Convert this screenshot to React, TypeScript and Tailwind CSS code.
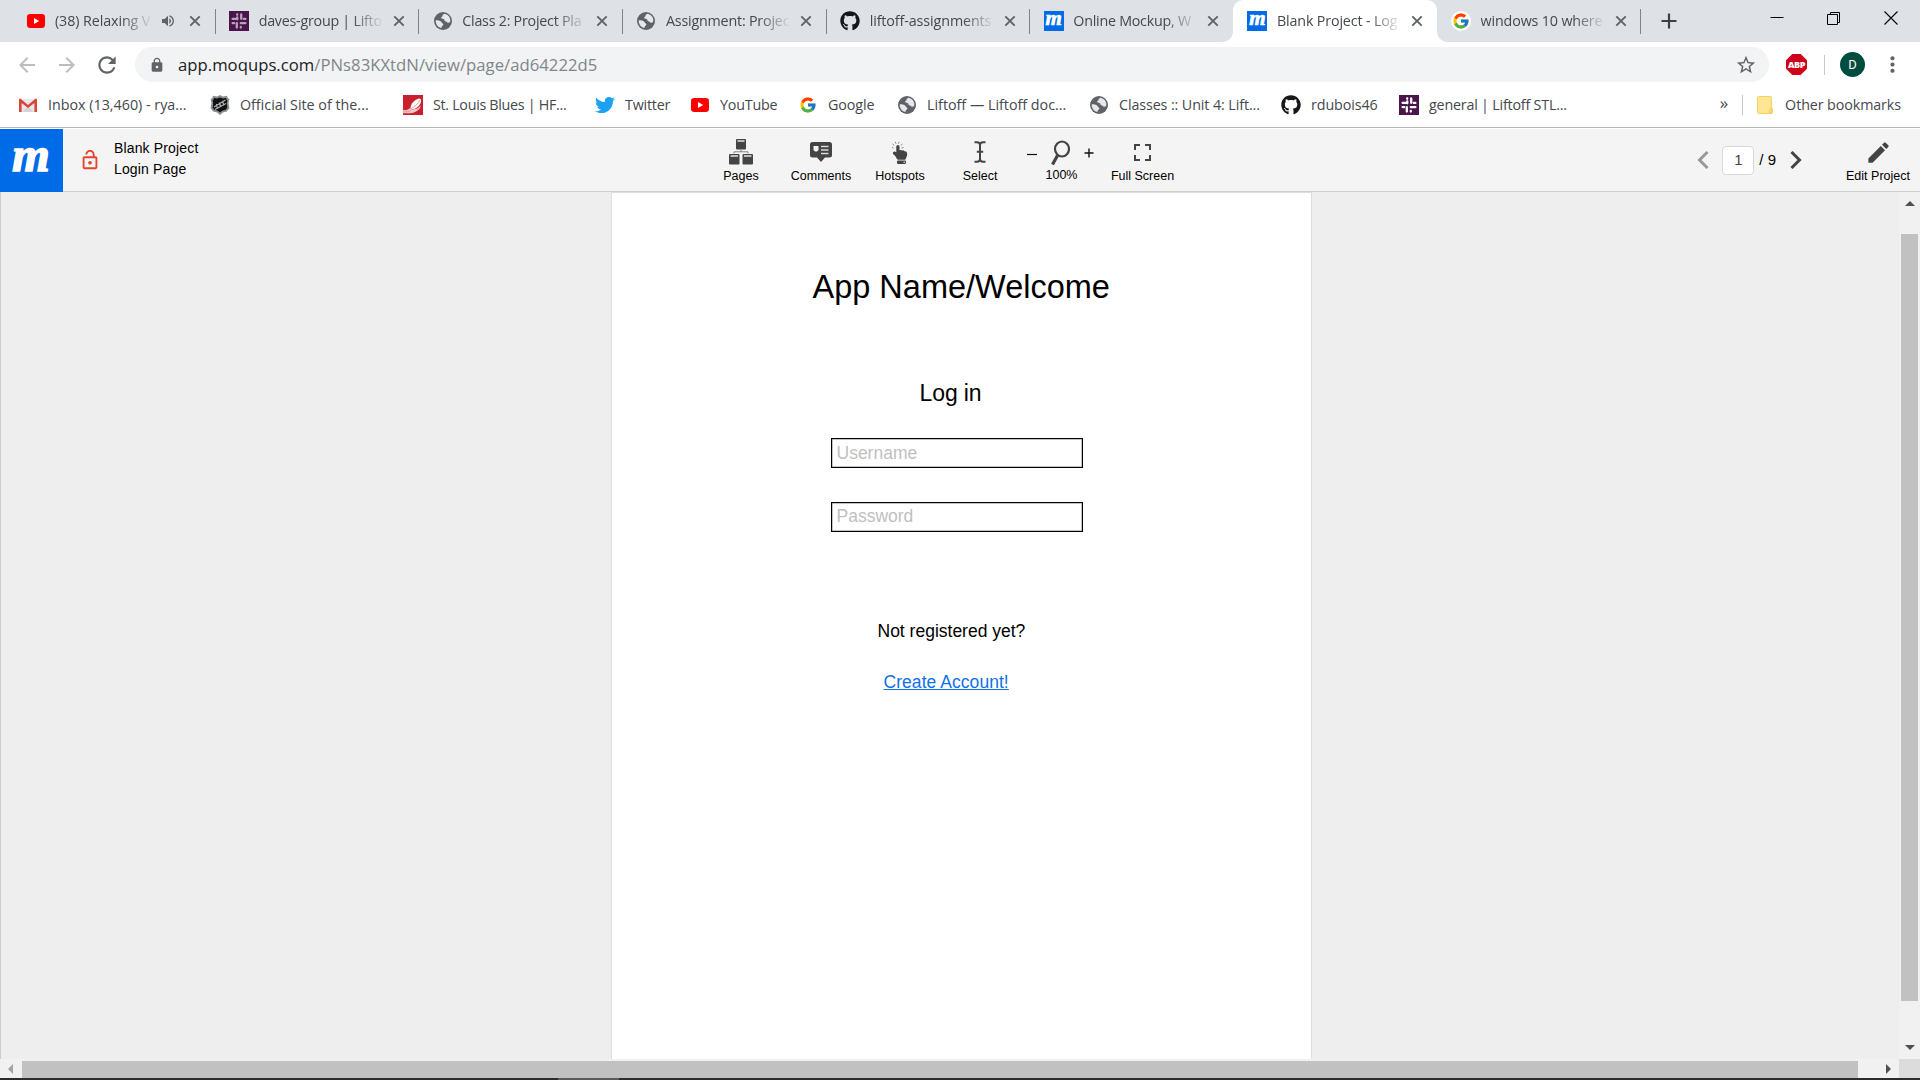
import React from 'react';
import { MdArrowBack, MdArrowForward, MdEdit, MdLock, MdMoreVert, MdOutlineLockOpen, MdRefresh, MdStarBorder, MdVolumeUp } from 'react-icons/md';
import { FaGithub, FaHandPointUp, FaTwitter, FaYoutube } from 'react-icons/fa';
import { FcGoogle } from 'react-icons/fc';

const YouTubeIcon = () => (
  <svg viewBox="0 0 20 20" className="size-5">
    <rect x="1" y="3" width="18" height="14" rx="3.2" fill="#f00" />
    <path d="M8 7l5.2 3L8 13z" fill="#fff" />
  </svg>
);

const SlackIcon = ({ dim = false }: { dim?: boolean }) => (
  <svg viewBox="0 0 20 20" className="size-5">
    <rect width="20" height="20" fill="#4a154b" />
    <g stroke={dim ? '#b9a3ba' : '#fff'} strokeWidth="2.3" strokeLinecap="round">
      <path d="M8.300 6.300v2M8.300 7.800H3.600M12.200 3.400v4.400M16.400 7.900h-1.600M11.800 12.200h4.600M11.800 12.200v0M7.800 12.200v4.400M3.600 12.100h1.600M8.200 3.400v.4M11.800 16.600v-.6" />
    </g>
  </svg>
);

const GlobeIcon = () => (
  <svg viewBox="0 0 20 20" className="size-5">
    <circle cx="10" cy="10" r="9" fill="#5f6368" />
    <path d="M11.500 2.800c-1.200.6-2.200 1.300-2 2.300.2.800-1.500.8-1.300 1.900.2.900 2.600.3 3 1.500.3 1.100.5 1.900 1.800 1.900 1.200 0 1.100 1.400 2.300 1.400 1 0 1.800-.7 2-1.800.3-3.400-1.900-6.300-5.800-7.200z" fill="#e6e8eb" />
    <path d="M2.700 9.300c1.800-.2 3.600 0 5 .9 1 .6.700 1.600 1.700 2 1.200.5 1.300 1.700.3 2.300-.9.500-.7 1.600-1.500 2.500C4.800 16.300 2.600 13.300 2.700 9.300z" fill="#e6e8eb" />
  </svg>
);
const GithubIcon = () => <FaGithub className="size-5 text-[#181717]" />;
const GoogleIcon = () => <FcGoogle className="size-[18px]" />;
const GoogleRoundIcon = () => (
  <span className="flex size-5 items-center justify-center rounded-full bg-white">
    <FcGoogle className="size-[18px]" />
  </span>
);
const MoqupsIcon = () => (
  <span className="flex size-5 items-center justify-center bg-[#006be6] pb-[5px] font-['Liberation_Serif',serif] text-[21px] leading-none font-bold text-white italic [-webkit-text-stroke:0.7px_white]">
    m
  </span>
);
const GmailIcon = () => (
  <svg viewBox="0 0 20 20" className="size-5">
    <path d="M2 4h16v13H2z" fill="#e9e9e9" />
    <path d="M4 17l6-6 6 6z" fill="#d5d5d5" />
    <path d="M1 4.5Q1 3.5 2.3 3.5L10 10l7.7-6.5Q19 3.5 19 4.5V17h-2.6V8L10 13 3.6 8v9H1z" fill="#db4437" />
  </svg>
);
const NhlIcon = () => (
  <svg viewBox="0 0 20 20" className="size-5">
    <path d="M10 0l3 1.400L17 .8l.8 2.400 1.600.6-.8 4.200.8 5.200-2.600 3.200-4 1L10 20l-2.800-2.600-4-1L.6 13.200l.8-5.200L.6 3.800l1.600-.6L3 .8l4 .6z" fill="#8c8f91" />
    <path d="M10 2.400l3 1.200 3-.6.600 1.800.8.400-.6 3 .5 4.600-1.600 2-3.500.9L10 17.600l-2.200-1.900-3.500-.9-1.600-2 .5-4.600-.6-3 .8-.4L4 3l3 .6z" fill="#111" />
    <path d="M4 12L15.500 5M5 14.500L16 8.500M6.500 9l.9 4.500M9.500 7.500l1 4M12.500 6l1.200 4" stroke="#b4b7b9" strokeWidth="1.100" />
  </svg>
);
const BluesIcon = () => (
  <svg viewBox="0 0 20 20" className="size-5">
    <rect width="20" height="20" fill="#c8202f" />
    <path d="M7.500 13c0-4 4.500-9 8.500-9.500 3 0 2.500 3.500.5 6.500-2 3-6.500 5.500-9 3z" fill="#fff" />
    <path d="M0 15c4 .5 5.500-.5 7-2 2.500 2.500 7.500 1.500 10.500-2.500 1 3-5 7.800-10.500 7.800H0z" fill="#f6c3c6" />
    <path d="M9 13c2-1 6-4 8-8M0 16.800c4 .3 6-.3 8-1.500" stroke="#e58088" strokeWidth=".8" fill="none" />
  </svg>
);
const TwitterIcon = () => <FaTwitter className="size-5 text-[#1da1f2]" />;

const CloseIcon = () => (
  <svg viewBox="0 0 12 12" className="size-3 shrink-0">
    <path d="M1.300 1.300l9.400 9.400M10.700 1.300l-9.400 9.400" stroke="#5f6368" strokeWidth="1.900" />
  </svg>
);

type Tab = { icon: React.ReactNode; title: string; audio?: boolean; active?: boolean; sep?: boolean; track: string };
const tabs: Tab[] = [
  { icon: <YouTubeIcon />, title: '(38) Relaxing V', audio: true, sep: true, track: 'tracking-[-0.1px]' },
  { icon: <SlackIcon dim />, title: 'daves-group | Lifto', sep: true, track: 'tracking-[-0.25px]' },
  { icon: <GlobeIcon />, title: 'Class 2: Project Pla', sep: true, track: 'tracking-[-0.25px]' },
  { icon: <GlobeIcon />, title: 'Assignment: Projec', sep: true, track: 'tracking-[-0.2px]' },
  { icon: <GithubIcon />, title: 'liftoff-assignments', sep: true, track: 'tracking-[-0.1px]' },
  { icon: <MoqupsIcon />, title: 'Online Mockup, W', track: 'tracking-[-0.25px]' },
  { icon: <MoqupsIcon />, title: 'Blank Project - Log', active: true, track: 'tracking-[-0.15px]' },
  { icon: <GoogleRoundIcon />, title: 'windows 10 where', sep: true, track: 'tracking-[-0.15px]' },
];

const bookmarks = [
  { icon: <GmailIcon />, label: 'Inbox (13,460) - rya...', cls: 'w-[192px] tracking-normal' },
  { icon: <NhlIcon />, label: 'Official Site of the...', cls: 'w-[193px] tracking-normal' },
  { icon: <BluesIcon />, label: 'St. Louis Blues | HF...', cls: 'w-[192px] tracking-[-0.3px]' },
  { icon: <TwitterIcon />, label: 'Twitter', cls: 'w-[95px] tracking-[-0.2px]' },
  { icon: <YouTubeIcon />, label: 'YouTube', cls: 'w-[108px] tracking-[-0.2px]' },
  { icon: <GoogleIcon />, label: 'Google', cls: 'w-[99px] tracking-[-0.1px]' },
  { icon: <GlobeIcon />, label: 'Liftoff — Liftoff doc...', cls: 'w-[192px] tracking-normal' },
  { icon: <GlobeIcon />, label: 'Classes :: Unit 4: Lift...', cls: 'w-[192px] tracking-[-0.1px]' },
  { icon: <GithubIcon />, label: 'rdubois46', cls: 'w-[118px] tracking-[-0.1px]' },
  { icon: <SlackIcon />, label: 'general | Liftoff STL...', cls: 'w-[170px] tracking-[-0.2px]' },
];

function TabItem({ tab }: { tab: Tab }) {
  return (
    <div className={`relative flex h-full w-[203.670px] items-center pl-[14.500px] ${tab.active ? 'rounded-t-[10px] bg-white' : ''}`}>
      <span className="flex size-5 shrink-0 items-center justify-center">{tab.icon}</span>
      <span
        className={`ml-[9.500px] h-6 leading-6 whitespace-nowrap text-[#45484c] ${tab.track} ${tab.audio ? 'w-[98px]' : 'w-[125px]'} [mask-image:linear-gradient(to_right,black_calc(100%-32px),transparent)]`}
      >
        {tab.title}
      </span>
      {tab.audio && <MdVolumeUp className="ml-[7px] size-4 text-[#5f6368]" />}
      <span className={tab.audio ? 'ml-[13px]' : 'ml-[9px]'}>
        <CloseIcon />
      </span>
      {tab.sep && <span className="absolute top-[9px] right-[-1px] h-[25px] w-px bg-[#808387]" />}
      {tab.active && (
        <>
          <span className="absolute bottom-0 left-[-10px] size-[10px] bg-[radial-gradient(circle_at_0_0,transparent_9.500px,white_10px)]" />
          <span className="absolute right-[-10px] bottom-0 size-[10px] bg-[radial-gradient(circle_at_100%_0,transparent_9.500px,white_10px)]" />
        </>
      )}
    </div>
  );
}

function TabStrip() {
  return (
    <div className="flex h-[42px] bg-[#dee1e6] pl-[11px]">
      {tabs.map((t) => (
        <TabItem key={t.title} tab={t} />
      ))}
      <svg viewBox="0 0 16 16" className="mt-[13px] ml-[21px] size-4">
        <path d="M8 .5v15M.5 8h15" stroke="#3c4043" strokeWidth="2.200" />
      </svg>
      <div className="mr-[22px] ml-auto flex gap-[43px] pt-[11px] text-black">
        <svg viewBox="0 0 14 14" className="h-[14px] w-[14px]">
          <path d="M.5 6.500h13" stroke="currentColor" />
        </svg>
        <svg viewBox="0 0 14 14" className="h-[14px] w-[14px]">
          <path d="M.5 3.500h10v10H.5zM3.500 3V1.500h9v10H11" stroke="currentColor" fill="none" />
        </svg>
        <svg viewBox="0 0 14 14" className="h-[14px] w-[14px]">
          <path d="M.5.5l13 13M13.500.5l-13 13" stroke="currentColor" strokeWidth="1.100" />
        </svg>
      </div>
    </div>
  );
}

function AddressBar() {
  return (
    <div className="flex h-[45px] items-center bg-white pl-[15px]">
      <MdArrowBack className="size-[24px] text-[#bbbdbf]" />
      <MdArrowForward className="ml-[16px] size-[24px] text-[#bbbdbf]" />
      <MdRefresh className="ml-[15px] size-[26px] text-[#5f6368]" />
      <div className="ml-[15px] flex h-[35px] w-[1634px] items-center rounded-full bg-[#f1f3f4] pl-[14px]">
        <MdLock className="size-4 text-[#5f6368]" />
        <span className="ml-[12px] pl-px text-[16.700px] tracking-[0.02px] text-[#202124]">
          app.moqups.com<span className="text-[#80868b]">/PNs83KXtdN/view/page/ad64222d5</span>
        </span>
        <MdStarBorder className="mr-[12px] ml-auto size-[22px] text-[#5f6368]" />
      </div>
      <div className="ml-[17px] flex h-[21px] w-[21px] items-center justify-center bg-[#d0021b] font-['Open_Sans',sans-serif] text-[9px] font-extrabold tracking-[-0.4px] text-white [clip-path:polygon(30%_0,70%_0,100%_30%,100%_70%,70%_100%,30%_100%,0_70%,0_30%)]">
        ABP
      </div>
      <span className="ml-[17px] h-5 w-px bg-[#c6c8ca]" />
      <span className="ml-[15px] flex size-[25px] items-center justify-center rounded-full bg-[#004d40] font-['Roboto',sans-serif] text-[13px] text-white">D</span>
      <MdMoreVert className="ml-[15px] size-[25px] text-[#5f6368]" />
    </div>
  );
}

function BookmarksBar() {
  return (
    <div className="mb-px flex h-[41px] items-center border-b border-[#b6b4b6] bg-white pb-[4px] pl-[18px]">
      {bookmarks.map((b) => (
        <div key={b.label} className={`flex items-center gap-[10px] whitespace-nowrap ${b.cls}`}>
          <span className="flex size-5 shrink-0 items-center justify-center">{b.icon}</span>
          {b.label}
        </div>
      ))}
      <span className="ml-auto pb-1 text-[17px]">»</span>
      <span className="ml-[14px] h-5 w-px bg-[#c6c8ca]" />
      <svg viewBox="0 0 16 18" className="ml-[14px] h-[18px] w-4">
        <path d="M1.500.5h12q1 0 1 1v10.500l1 1v3.500q0 1-1 1h-13q-1 0-1-1V1.500q0-1 1-1z" fill="#ffe694" stroke="#f3d263" />
        <path d="M12.500 17v-4q1-2 2.500 0v4z" fill="#fbdc74" stroke="#f0cb52" strokeWidth=".7" />
      </svg>
      <span className="mr-[19px] ml-[12px] tracking-[-0.1px]">Other bookmarks</span>
    </div>
  );
}

function Tool({ label, width, children }: { label: string; width: string; children: React.ReactNode }) {
  return (
    <div className={`flex flex-col items-center ${width}`}>
      <div className="flex h-[39px] items-center justify-center pt-[7px]">{children}</div>
      <span className="leading-4 whitespace-nowrap">{label}</span>
    </div>
  );
}

const PagesIcon = () => (
  <svg viewBox="0 0 24 26" className="h-[26px] w-6">
    <g fill="#444">
      <rect x="7" y="0" width="10" height="10.500" rx="1" />
      <rect x="0" y="15" width="10.500" height="10.500" rx="1" />
      <rect x="13.500" y="15" width="10.500" height="10.500" rx="1" />
    </g>
    <path d="M8.500 2h7M1.500 17h7.500M15 17h7.500" stroke="#bbb" strokeWidth="1.800" />
    <path d="M12 11v2M5 14.500v-1.700h14v1.700" stroke="#777" fill="none" strokeWidth=".9" />
  </svg>
);
const CommentsIcon = () => (
  <svg viewBox="0 0 22 20" className="h-5 w-[22px]">
    <path d="M2.500 0h17Q22 0 22 2.500v10.500q0 2.500-2.500 2.500H15L11 20l-4-4.500H2.500Q0 15.500 0 13V2.500Q0 0 2.500 0z" fill="#444" />
    <path d="M3.500 4h5v4l-1.500 1.500H5L3.500 8z" fill="#f4f4f4" />
    <path d="M11 4.500h7.500M11 8h7.500M11 11.500h7.500" stroke="#d8d8d8" strokeWidth="1.400" />
  </svg>
);
const HotspotsIcon = () => (
  <span className="relative block h-[23px] w-[18px]">
    <FaHandPointUp className="absolute top-[4px] left-0 h-[19px] w-[18px] text-[#444]" />
    <svg viewBox="0 0 14 8" className="absolute top-0 left-0 h-2 w-[14px]">
      <path d="M1 6.500l1.500.5M1.500 3l1.700 1.400M4.300.8L5 2.600M8.200.8l-.7 1.800M11.500 3L9.800 4.400M12.500 6.500L10.500 7" stroke="#777" strokeWidth=".9" />
    </svg>
  </span>
);
const SelectIcon = () => (
  <svg viewBox="0 0 12 22" className="h-[22px] w-3">
    <path d="M.5 1.200h2.500Q6 1.200 6 4v14q0 2.800-3 2.800H.5M11.500 1.200H9Q6 1.200 6 4v14q0 2.800 3 2.800h2.500M2.800 10.800h6.400" stroke="#444" strokeWidth="2" fill="none" />
  </svg>
);

const Chevron = ({ className, d }: { className: string; d: string }) => (
  <svg viewBox="0 0 12 18" className={className}>
    <path d={d} stroke="currentColor" strokeWidth="3" fill="none" />
  </svg>
);

function AppHeader() {
  return (
    <header className="flex h-[63px] border-b border-[#cfcfcf] bg-[#f4f4f4] font-['Liberation_Sans',sans-serif] text-[12.500px] text-black">
      <div className="flex h-[63px] w-[63px] items-center justify-center bg-[#006be6] pr-px pb-[11px] font-['Liberation_Serif',serif] text-[48px] leading-none font-bold text-white italic [-webkit-text-stroke:1.600px_white]">
        m
      </div>
      <MdOutlineLockOpen className="mt-[20px] ml-[16px] size-[22px] text-[#e5432e]" />
      <div className="ml-[13px] w-[586px] pt-[9px] text-[14px] leading-[21px] tracking-[0.150px]">
        <p>Blank Project</p>
        <p>Login Page</p>
      </div>
      <div className="flex">
        <Tool label="Pages" width="w-[82px]"><PagesIcon /></Tool>
        <Tool label="Comments" width="w-[78px]"><CommentsIcon /></Tool>
        <Tool label="Hotspots" width="w-[80px]"><HotspotsIcon /></Tool>
        <Tool label="Select" width="w-[80px]"><SelectIcon /></Tool>
        <div className="flex w-[83px] flex-col items-center">
          <div className="flex h-[38px] items-center gap-[14px] pt-[9px] pr-[2px]">
            <svg viewBox="0 0 10 10" className="size-[10px]"><path d="M0 6.500h10" stroke="#111" strokeWidth="1.200" /></svg>
            <svg viewBox="0 0 19 26" className="h-[26px] w-[19px]">
              <ellipse cx="11" cy="9" rx="7" ry="7.500" fill="none" stroke="#444" strokeWidth="2.200" />
              <path d="M6.500 15.500L1.500 24.500" stroke="#444" strokeWidth="3.200" />
            </svg>
            <svg viewBox="0 0 10 10" className="size-[10px]"><path d="M.5 5h9M5 .5v9" stroke="#111" strokeWidth="1.400" /></svg>
          </div>
          <span className="leading-4">100%</span>
        </div>
        <Tool label="Full Screen" width="w-[79px]">
          <svg viewBox="0 0 17 17" className="size-[17px]">
            <path d="M1 6V1h5M11 1h5v5M16 11v5h-5M6 16H1v-5" stroke="#444" strokeWidth="2" fill="none" />
          </svg>
        </Tool>
      </div>
      <div className="ml-auto flex items-center">
        <Chevron className="h-[18px] w-3 text-[#999]" d="M10.500 1L2.500 9l8 8" />
        <div className="ml-[13px] flex h-[29px] w-8 items-center justify-center rounded border border-[#d9d9d9] bg-white text-[15px] text-[#444]">1</div>
        <span className="ml-[5px] text-[15px]">/ 9</span>
        <Chevron className="ml-[14px] h-[18px] w-3 text-[#444]" d="M1.500 1l8 8-8 8" />
      </div>
      <div className="mr-[9px] ml-[43px]">
        <Tool label="Edit Project" width="w-[66px]"><MdEdit className="size-[27px] text-[#444]" /></Tool>
      </div>
    </header>
  );
}

function Field({ label, className }: { label: string; className: string }) {
  return (
    <div className={`ml-[219px] w-[252px] border border-black pl-[5px] text-[17.500px] text-[#bfbfbf] shadow-[inset_0_0_0_0.5px_#888] ${className}`}>{label}</div>
  );
}

function Page() {
  return (
    <main className="w-[701px] border-x border-t border-[#dedede] bg-white font-['Liberation_Sans',sans-serif] text-[17.500px] text-black">
      <h1 className="mt-[74px] ml-[201px] text-[32.500px] leading-10">App Name/Welcome</h1>
      <h2 className="mt-[72px] ml-[308px] text-[23px] leading-7 tracking-[-0.1px]">Log in</h2>
      <Field label="Username" className="mt-[31px] h-[30px] leading-[28px]" />
      <Field label="Password" className="mt-[34px] h-[30px] leading-[27px]" />
      <p className="mt-[87px] ml-[266px] leading-6">Not registered yet?</p>
      <a className="mt-[27px] ml-[272px] block leading-6 tracking-[0.05px] text-[#1070e8] underline">Create Account!</a>
    </main>
  );
}

const Arrow = ({ className, points }: { className: string; points: string }) => (
  <svg viewBox="0 0 10 10" className={`size-[10px] ${className}`}>
    <polygon points={points} fill="currentColor" />
  </svg>
);

export default function App() {
  return (
    <div className="flex h-[1080px] w-[1920px] flex-col overflow-hidden bg-white font-['Open_Sans',sans-serif] text-[14.300px] text-[#45484c]">
      <TabStrip />
      <AddressBar />
      <BookmarksBar />
      <AppHeader />
      <div className="flex h-[867px] bg-[#eee]">
        <div className="flex flex-1 justify-start border-l border-[#ccc] pl-[609.500px]">
          <Page />
        </div>
        <div className="flex w-[21px] flex-col items-center bg-[#f1f1f1]">
          <Arrow className="mt-[6px] text-[#505050]" points="0,8 5,3 10,8" />
          <div className="mt-[26px] h-[767px] w-[17px] bg-[#c1c1c1]" />
          <Arrow className="mt-[41px] text-[#505050]" points="0,3 10,3 5,8" />
        </div>
      </div>
      <div className="flex h-[19px] bg-[#f1f1f1]">
        <div className="flex w-[22px] items-center justify-center">
          <Arrow className="text-[#a3a3a3]" points="7,0 7,10 2,5" />
        </div>
        <div className="mt-[2px] w-[1836px] bg-[#c1c1c1]" />
        <Arrow className="mt-[5px] ml-[25px] text-[#505050]" points="3,0 8,5 3,10" />
        <div className="ml-auto w-[21px] bg-[#dcdcdc]" />
      </div>
      <div className="flex h-[2px] bg-[#2d2b2c] pl-[558px]">
        <div className="w-[61px] bg-[#5c5a5b]" />
      </div>
    </div>
  );
}
